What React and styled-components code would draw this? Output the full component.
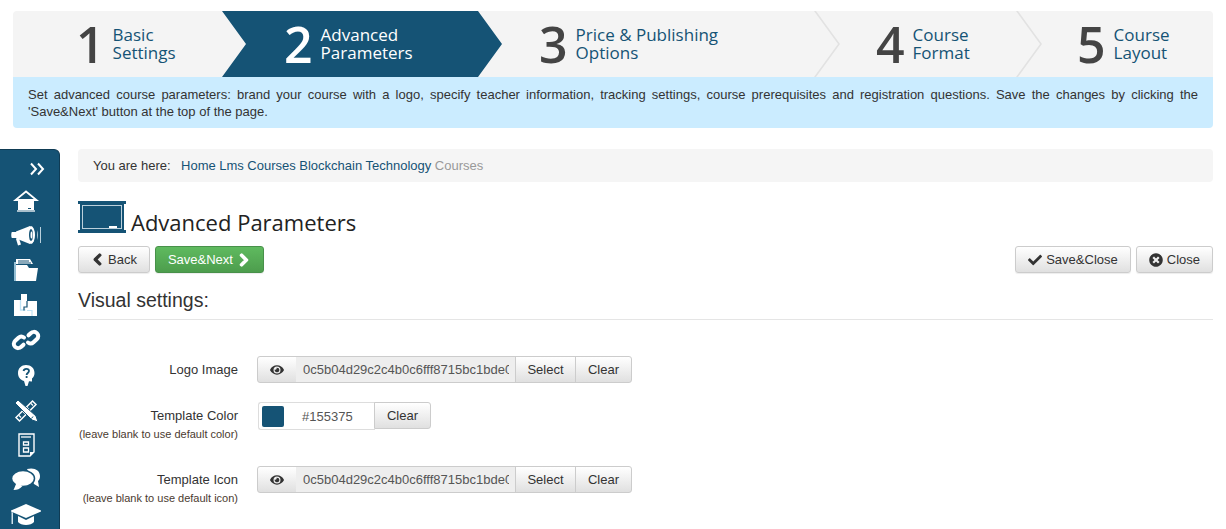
import React from "react";
import styled, { createGlobalStyle } from "styled-components";
import { FaChevronLeft, FaChevronRight, FaCheck, FaTimesCircle, FaEye } from "react-icons/fa";

const brand = "#155375";

const Global = createGlobalStyle`
  html, body { margin: 0; padding: 0; background: #fff; }
  body {
    font-family: "Liberation Sans", Arial, sans-serif;
    font-size: 13px;
    color: #333;
    height: 529px;
    overflow: hidden;
  }
`;

const Page = styled.div`
  padding-top: 11px;
`;

const Header = styled.div`
  margin: 0 13px;
  border-radius: 4px;
  overflow: hidden;
`;

const Steps = styled.div`
  display: flex;
  height: 66px;
  background: #f4f4f4;
  overflow: hidden;
`;

const Step = styled.div`
  position: relative;
  flex: 0 0 ${({ $w }) => $w}px;
  display: flex;
  align-items: center;
  gap: 8px;
  padding-left: ${({ $pad }) => $pad}px;
  box-sizing: border-box;
  font-family: "Open Sans", sans-serif;
  color: ${({ $active }) => ($active ? "#fff" : brand)};
  &::before {
    content: "";
    display: ${({ $active }) => ($active ? "block" : "none")};
    position: absolute;
    top: 0;
    bottom: 0;
    left: 0;
    right: -24px;
    z-index: 1;
    background: ${brand};
    clip-path: polygon(0 0, calc(100% - 24px) 0, 100% 50%, calc(100% - 24px) 100%, 0 100%, 24px 50%);
  }
  &::after {
    content: "";
    display: ${({ $line }) => ($line ? "block" : "none")};
    position: absolute;
    top: 0;
    bottom: 0;
    right: -25px;
    width: 26px;
    background: #e2e2e2;
    clip-path: polygon(0 0, 2px 0, 26px 50%, 2px 100%, 0 100%, 24px 50%);
  }
`;

const StepNum = styled.span`
  position: relative;
  z-index: 2;
  font-size: 50px;
  line-height: 66px;
  font-weight: 600;
  color: ${({ $active }) => ($active ? "#fff" : "#444")};
`;

const StepLabel = styled.span`
  position: relative;
  z-index: 2;
  font-size: 17px;
  line-height: 18px;
  white-space: pre-line;
`;

const Info = styled.div`
  background: #cbecff;
  padding: 9px 15px 8px;
  height: 51px;
  box-sizing: border-box;
  font-size: 13px;
  line-height: 17px;
  color: #333;
`;

const InfoLine = styled.div`
  text-align: justify;
  text-align-last: ${({ $full }) => ($full ? "justify" : "left")};
`;

const Body = styled.div`
  display: flex;
  gap: 18px;
  margin-top: 21px;
  padding-right: 13px;
`;

const Sidebar = styled.aside`
  flex: 0 0 60px;
  box-sizing: border-box;
  height: 400px;
  background: ${brand};
  border: 1px solid #0f3b54;
  border-left: none;
  border-top-right-radius: 6px;
  padding: 10px 0 0 11px;
  display: flex;
  flex-direction: column;
  gap: 5px;
`;

const Expand = styled.svg`
  width: 16px;
  height: 14px;
  margin: 2px 0 4px 18px;
`;

const NavIcon = styled.svg`
  width: 30px;
  height: 30px;
  flex: none;
`;

const Main = styled.main`
  flex: 1;
  min-width: 0;
`;

const Crumbs = styled.div`
  height: 33px;
  box-sizing: border-box;
  background: #f5f5f5;
  border-radius: 4px;
  padding-left: 15px;
  display: flex;
  align-items: center;
  gap: 3.500px;
  font-size: 13px;
  color: #333;
`;

const CrumbLabel = styled.span`
  margin-right: 7px;
`;

const Crumb = styled.a`
  color: ${({ $muted }) => ($muted ? "#999" : brand)};
`;

const Title = styled.div`
  display: flex;
  align-items: flex-end;
  gap: 5px;
  margin-top: 19px;
`;

const Board = styled.svg`
  width: 48px;
  height: 32px;
`;

const TitleText = styled.h1`
  margin: 0 0 -4px;
  font-family: "Open Sans", sans-serif;
  font-size: 22px;
  line-height: 30px;
  font-weight: 400;
  color: #222;
`;

const Toolbar = styled.div`
  display: flex;
  justify-content: space-between;
  margin-top: 13px;
`;

const BtnGroup = styled.div`
  display: flex;
  gap: 5px;
`;

const Btn = styled.button`
  height: 27px;
  padding: 0 12px;
  display: inline-flex;
  align-items: center;
  gap: 4px;
  font-family: "Liberation Sans", Arial, sans-serif;
  font-size: 13px;
  border-radius: 3px;
  border: 1px solid ${({ $success }) => ($success ? "#48914a" : "#ccc")};
  color: ${({ $success }) => ($success ? "#fff" : "#333")};
  background: ${({ $success }) =>
    $success ? "linear-gradient(#5fba5f, #4d9d4d)" : "linear-gradient(#fff, #e0e0e0)"};
  box-shadow: 0 1px 1px rgba(0, 0, 0, 0.075);
`;

const BackIcon = styled(FaChevronLeft)`
  stroke: currentColor;
  stroke-width: 50;
`;

const NextIcon = styled(FaChevronRight)`
  stroke: currentColor;
  stroke-width: 50;
`;

const Section = styled.h3`
  margin: 15px 0 0;
  padding-bottom: 7px;
  border-bottom: 1px solid #e5e5e5;
  font-size: 19.500px;
  line-height: 24px;
  font-weight: 400;
  color: #333;
`;

const Form = styled.div`
  margin-top: 36px;
  display: flex;
  flex-direction: column;
`;

const Row = styled.div`
  display: flex;
  gap: 20px;
  height: ${({ $h }) => $h}px;
`;

const LabelCol = styled.div`
  flex: 0 0 160px;
  text-align: right;
`;

const Label = styled.div`
  font-size: 13px;
  line-height: 27px;
  color: #333;
`;

const Hint = styled.div`
  margin-top: -1px;
  font-size: 11px;
  line-height: 12px;
  white-space: nowrap;
  color: #4a3a30;
`;

const Group = styled.div`
  display: flex;
  height: 27px;
  font-size: 13px;
`;

const Addon = styled.button`
  width: ${({ $w }) => $w}px;
  height: 27px;
  margin-left: -1px;
  padding: 0;
  font-family: "Liberation Sans", Arial, sans-serif;
  font-size: 13px;
  color: #333;
  border: 1px solid #ccc;
  border-radius: ${({ $round }) =>
    $round === "left" ? "3px 0 0 3px" : $round === "right" ? "0 3px 3px 0" : "0"};
  background: linear-gradient(#fff, #e0e0e0);
  display: flex;
  align-items: center;
  justify-content: center;
`;

const PathField = styled.div`
  width: 220px;
  box-sizing: border-box;
  height: 27px;
  margin-left: -1px;
  padding: 0 7px;
  background: #eee;
  border-top: 1px solid #ccc;
  border-bottom: 1px solid #ccc;
  line-height: 25px;
  color: #555;
`;

const PathText = styled.div`
  width: 206px;
  overflow: hidden;
  white-space: nowrap;
`;

const ColorField = styled.div`
  width: 117px;
  box-sizing: border-box;
  height: 28px;
  border: 1px solid #ddd;
  border-right: none;
  border-radius: 3px 0 0 3px;
  display: flex;
  align-items: center;
  padding-left: 3px;
  gap: 18px;
  color: #555;
`;

const Swatch = styled.span`
  width: 22px;
  height: 21px;
  border-radius: 2px;
  background: ${({ $color }) => $color};
`;

const Eye = styled(FaEye)`
  font-size: 14px;
  color: #333;
`;

const Home = () => (
  <NavIcon viewBox="0 0 30 30">
    <path d="M15 6.500 4.500 15h21z" fill="none" stroke="#fff" strokeWidth="1.800" />
    <rect x="7" y="16" width="16" height="9" fill="#fff" />
    <rect x="6" y="25" width="18" height="2" fill="#a9c0cd" />
    <rect x="17" y="23" width="3" height="1" fill={brand} />
  </NavIcon>
);

const Horn = () => (
  <NavIcon viewBox="0 0 30 30">
    <path d="M1 12h4v6H1c-1 0-1-6 0-6z" fill="#fff" />
    <path d="M5 11.500 19 6v18L5 18.500z" fill="#fff" />
    <path d="m5 19 3-.5 2 6-3 1z" fill="#fff" />
    <ellipse cx="20" cy="15" rx="4" ry="9" fill="#fff" />
    <ellipse cx="20" cy="15" rx="2" ry="6" fill={brand} />
    <ellipse cx="20.500" cy="15" rx="1" ry="3.500" fill="#fff" />
    <path d="M26 10c1.200 3 1.200 7 0 10zM29 7h1v16h-1z" fill="#b9d0dc" />
  </NavIcon>
);

const Folder = () => (
  <NavIcon viewBox="0 0 30 30">
    <path d="M4 7v19" stroke="#bfe3f5" strokeWidth="1.500" />
    <path d="M5 4h14l3 5H5z" fill="#fff" />
    <path d="M7 6h11M7 8h13" stroke={brand} strokeWidth="1" />
    <path d="M5 10h11l2 3h9l-2 13H5z" fill="#fff" />
  </NavIcon>
);

const Blocks = () => (
  <NavIcon viewBox="0 0 30 30">
    <path d="M3 10h7V4h6v7h10v15H3z" fill="#fff" />
    <path d="M9.500 10v10h5" fill="none" stroke="#bfe3f5" strokeWidth="1.300" />
    <path d="M16 11v6h-3v3.500" fill="none" stroke={brand} strokeWidth="1.200" />
    <path d="M16 20.500h5v5.500" fill="none" stroke="#bfe3f5" strokeWidth="1.200" />
  </NavIcon>
);

const Chain = () => (
  <NavIcon viewBox="0 0 30 30">
    <g fill="none" stroke="#fff" strokeWidth="4" strokeLinecap="round">
      <path d="M13 12.500c-2-1.500-4-1.200-5.500.2l-3.200 3c-2 2-2 4.500-.2 6.200s4.400 1.600 6.200-.1l2.200-2.100" />
      <path d="M17 17.500c2 1.500 4 1.200 5.500-.2l3.200-3c2-2 2-4.500.2-6.200s-4.400-1.600-6.200.1l-2.200 2.100" />
    </g>
  </NavIcon>
);

const Question = () => (
  <NavIcon viewBox="0 0 30 30">
    <path d="M15 5c5 0 8.500 3.200 8.500 8 0 2.800-1 4.200-2.500 5.500v3l-3-.3-1.500 4.800h-2L13 21c-4-1-6-4.200-6-8 0-4.800 3.500-8 8-8z" fill="#fff" />
    <path d="M12.500 11c.4-1.600 1.500-2.200 2.800-2.200 1.600 0 2.700.9 2.700 2.300 0 1.800-2.400 2.100-2.400 3.900M15.600 16v2" fill="none" stroke={brand} strokeWidth="1.800" />
  </NavIcon>
);

const Tools = () => (
  <NavIcon viewBox="0 0 30 30">
    <path d="M5 22.500 21.500 6l3.500 3.500L8.500 26z" fill={brand} stroke="#fff" strokeWidth="1.500" />
    <path d="M8 20.500l2 2M12 16.500l2 2M16 12.500l2 2M20 8.500l2 2" stroke="#fff" strokeWidth="1.200" />
    <path d="M7 5 4 8l17 17 6 2-2-6z" fill="#fff" stroke={brand} strokeWidth="1" />
    <path d="M22 21.500l-1.500 2" stroke={brand} strokeWidth="1" />
  </NavIcon>
);

const Sheet = () => (
  <NavIcon viewBox="0 0 30 30">
    <path d="M8 4h15v18l-4 4H8z" fill="none" stroke="#fff" strokeWidth="1.400" />
    <path d="M10 7h10" stroke="#a9c0cd" strokeWidth="2" />
    <path d="M12.500 12h5v3h-5zM12.500 18h5v4h-5z" fill="none" stroke="#fff" strokeWidth="1.300" />
    <path d="M19 26v-4h4z" fill="#fff" />
  </NavIcon>
);

const Bubbles = () => (
  <NavIcon viewBox="0 0 30 30">
    <path d="M16 4c7-2 13 1 13 7 0 3-1 4-2 5l1 6-5-3z" fill="#fff" />
    <ellipse cx="12" cy="13.500" rx="11.500" ry="8" fill="#fff" stroke={brand} strokeWidth="1.500" />
    <path d="m2.500 25 3-7 6 3c-3 3-5 4-9 4z" fill="#fff" />
  </NavIcon>
);

const Cap = () => (
  <NavIcon viewBox="0 0 30 30">
    <path d="M15 4 31 11 15 18 -1 11z" fill="#fff" />
    <path d="M7 16v6c3 4 13 4 16 0v-6l-8 4z" fill="#fff" />
    <path d="M.5 12v12H2V12.500z" fill="#cfe2ec" />
  </NavIcon>
);

const navIcons = [Home, Horn, Folder, Blocks, Chain, Question, Tools, Sheet, Bubbles, Cap];

const steps = [
  { num: 1, label: "Basic\nSettings", w: 209, pad: 63 },
  { num: 2, label: "Advanced\nParameters", w: 256, pad: 62, active: true },
  { num: 3, label: "Price & Publishing\nOptions", w: 337, pad: 61, line: true },
  { num: 4, label: "Course\nFormat", w: 202, pad: 61, line: true },
  { num: 5, label: "Course\nLayout", w: 196, pad: 60 },
];

const fileName = "0c5b04d29c2c4b0c6fff8715bc1bde0";

const App = () => {
  return (
    <Page>
      <Global />
      <Header>
        <Steps>
          {steps.map((s) => (
            <Step key={s.num} $w={s.w} $pad={s.pad} $active={s.active} $line={s.line}>
              <StepNum $active={s.active}>{s.num}</StepNum>
              <StepLabel>{s.label}</StepLabel>
            </Step>
          ))}
        </Steps>
        <Info>
          <InfoLine $full>
            Set advanced course parameters: brand your course with a logo, specify teacher information, tracking
            settings, course prerequisites and registration questions. Save the changes by clicking the
          </InfoLine>
          <InfoLine>'Save&amp;Next' button at the top of the page.</InfoLine>
        </Info>
      </Header>
      <Body>
        <Sidebar>
          <Expand viewBox="0 0 16 14">
            <path d="M2 1.500 7 7l-5 5.500M9 1.500 14 7l-5 5.500" fill="none" stroke="#fff" strokeWidth="2" />
          </Expand>
          {navIcons.map((Icon, i) => (
            <Icon key={i} />
          ))}
        </Sidebar>
        <Main>
          <Crumbs>
            <CrumbLabel>You are here:</CrumbLabel>
            <Crumb>Home</Crumb>
            <Crumb>Lms</Crumb>
            <Crumb>Courses</Crumb>
            <Crumb>Blockchain Technology</Crumb>
            <Crumb $muted>Courses</Crumb>
          </Crumbs>
          <Title>
            <Board viewBox="0 0 48 32">
              <rect x="0" y="0" width="48" height="3" fill={brand} />
              <rect x="0" y="29" width="48" height="3" fill={brand} />
              <rect x="2" y="3" width="44" height="26" fill={brand} />
              <rect x="4" y="4" width="40" height="24" fill="#bcd0db" />
              <rect x="5" y="5" width="38" height="22" fill={brand} />
              <rect x="31" y="25" width="8" height="2" fill="#fff" />
            </Board>
            <TitleText>Advanced Parameters</TitleText>
          </Title>
          <Toolbar>
            <BtnGroup>
              <Btn>
                <BackIcon size={13} /> Back
              </Btn>
              <Btn $success>
                Save&amp;Next <NextIcon size={14} />
              </Btn>
            </BtnGroup>
            <BtnGroup>
              <Btn>
                <FaCheck size={14} /> Save&amp;Close
              </Btn>
              <Btn>
                <FaTimesCircle size={14} /> Close
              </Btn>
            </BtnGroup>
          </Toolbar>
          <Section>Visual settings:</Section>
          <Form>
            <Row $h={46}>
              <LabelCol>
                <Label>Logo Image</Label>
              </LabelCol>
              <Group>
                <Addon $w={40} $round="left">
                  <Eye />
                </Addon>
                <PathField>
                  <PathText>{fileName}</PathText>
                </PathField>
                <Addon $w={61}>Select</Addon>
                <Addon $w={57} $round="right">
                  Clear
                </Addon>
              </Group>
            </Row>
            <Row $h={64}>
              <LabelCol>
                <Label>Template Color</Label>
                <Hint>(leave blank to use default color)</Hint>
              </LabelCol>
              <Group>
                <ColorField>
                  <Swatch $color={brand} />
                  #155375
                </ColorField>
                <Addon $w={57} $round="right">
                  Clear
                </Addon>
              </Group>
            </Row>
            <Row $h={45}>
              <LabelCol>
                <Label>Template Icon</Label>
                <Hint>(leave blank to use default icon)</Hint>
              </LabelCol>
              <Group>
                <Addon $w={40} $round="left">
                  <Eye />
                </Addon>
                <PathField>
                  <PathText>{fileName}</PathText>
                </PathField>
                <Addon $w={61}>Select</Addon>
                <Addon $w={57} $round="right">
                  Clear
                </Addon>
              </Group>
            </Row>
          </Form>
        </Main>
      </Body>
    </Page>
  );
};

export default App;
